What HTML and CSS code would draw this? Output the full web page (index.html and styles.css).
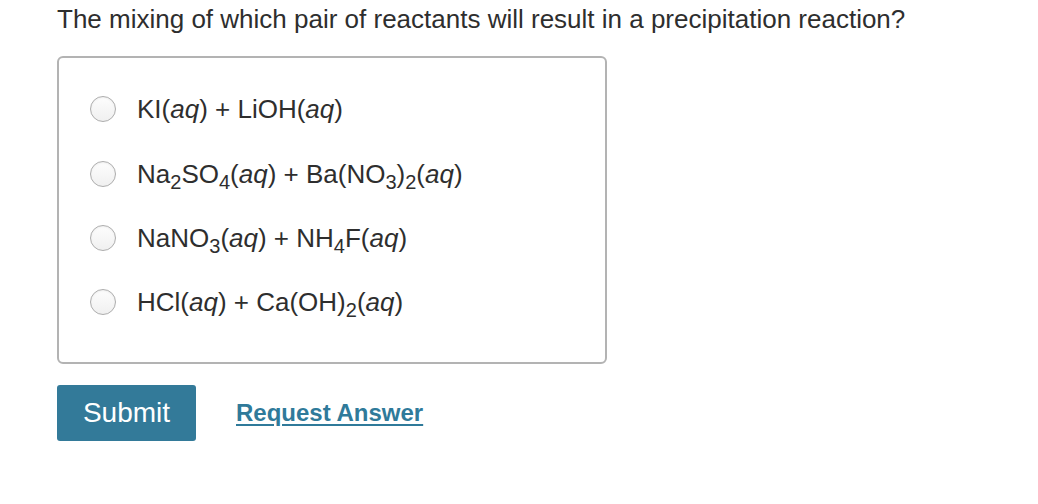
FILE: index.html
```html
<!DOCTYPE html>
<html>
<head>
<meta charset="utf-8">
<link rel="stylesheet" href="styles.css">
</head>
<body>
<div class="page">
  <p class="question">The mixing of which pair of reactants will result in a precipitation reaction?</p>
  <div class="choices">
    <label class="choice"><span class="radio"></span><span class="txt">KI(<i>aq</i>) + LiOH(<i>aq</i>)</span></label>
    <label class="choice"><span class="radio"></span><span class="txt">Na<sub>2</sub>SO<sub>4</sub>(<i>aq</i>) + Ba(NO<sub>3</sub>)<sub>2</sub>(<i>aq</i>)</span></label>
    <label class="choice"><span class="radio"></span><span class="txt">NaNO<sub>3</sub>(<i>aq</i>) + NH<sub>4</sub>F(<i>aq</i>)</span></label>
    <label class="choice"><span class="radio"></span><span class="txt">HCl(<i>aq</i>) + Ca(OH)<sub>2</sub>(<i>aq</i>)</span></label>
  </div>
  <div class="actions">
    <button class="submit">Submit</button>
    <a class="request" href="#">Request Answer</a>
  </div>
</div>
</body>
</html>
```

FILE: styles.css
```css
html, body {
  margin: 0;
  padding: 0;
  background: #fff;
}
body {
  font-family: "Liberation Sans", Arial, Helvetica, sans-serif;
  color: #333;
}
.page {
  padding: 0 0 0 57px;
}
.question {
  margin: 0;
  padding-top: 4px;
  font-size: 26px;
  line-height: 30px;
  color: #2e2e2e;
}
.choices {
  margin-top: 22px;
  border: 2px solid #b3b3b3;
  border-radius: 6px;
  box-sizing: border-box;
  width: 550px;
  height: 308px;
  padding: 19px 0 0 31px;
}
.choice {
  display: flex;
  align-items: center;
  height: 64.4px;
  font-size: 26px;
}
.radio {
  width: 26px;
  height: 26px;
  border-radius: 50%;
  border: 1px solid #adadad;
  box-sizing: border-box;
  background: linear-gradient(#fdfdfd, #f0f0f0);
  box-shadow: inset 0 1px 2px rgba(0,0,0,0.06);
  flex: none;
  margin-right: 21px;
}
.txt {
  line-height: 30px;
  color: #2e2e2e;
}
.txt i {
  font-style: italic;
}
.txt sub {
  font-size: 20px;
  vertical-align: -6px;
  line-height: 0;
}
.actions {
  display: flex;
  align-items: center;
  margin-top: 21px;
}
.submit {
  width: 139px;
  height: 56px;
  background: #337a99;
  color: #fff;
  border: none;
  border-radius: 3px;
  font-family: "Liberation Sans", Arial, sans-serif;
  font-size: 28px;
  padding: 0;
}
.request {
  margin-left: 40px;
  font-size: 24px;
  font-weight: bold;
  color: #2f7a9a;
  text-decoration: underline;
  text-underline-offset: 3px;
}
```
